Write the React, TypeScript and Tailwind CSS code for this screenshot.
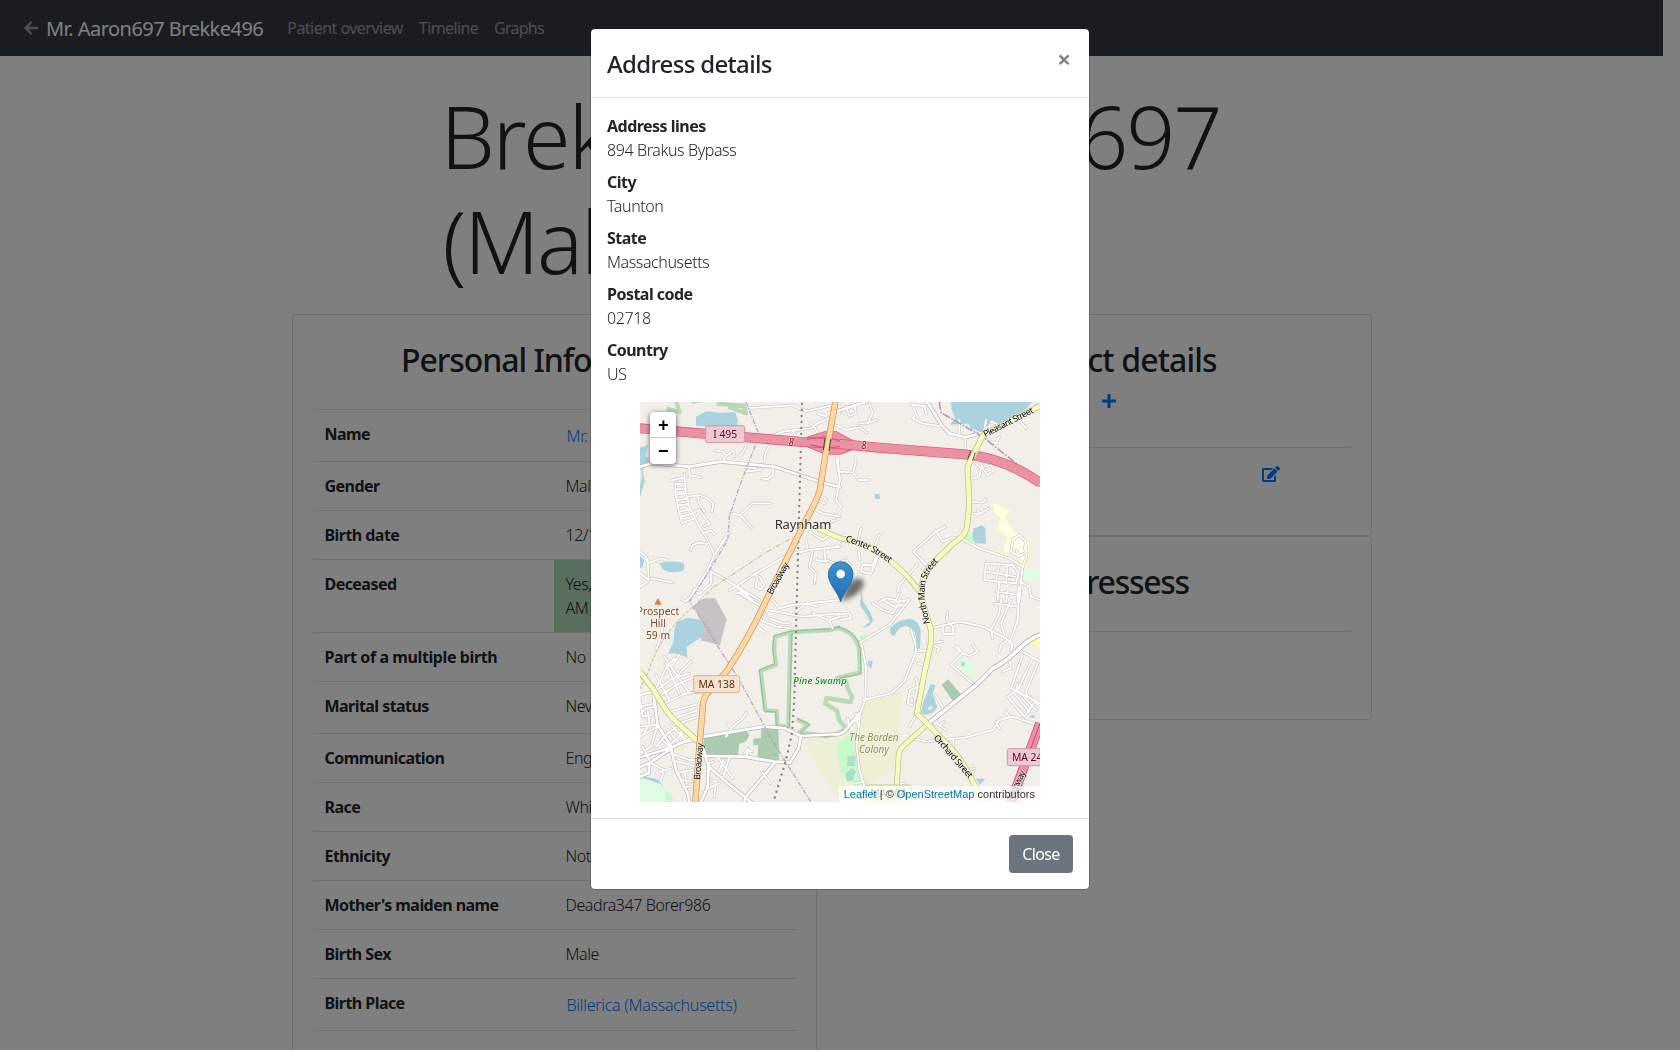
import React from "react";
import { FaArrowLeft, FaEdit, FaPlus } from "react-icons/fa";

/* ---------- Map data: four tiles, 3 units per pixel ---------- */

type Tile = { x: number; y: number; minor: string[]; mid: string[] };

const tiles: Tile[] = [
  {
    x: -12,
    y: -6,
    minor: [
      "M340 24 L470 16 L510 34 L612 10",
      "M240 152 L262 155 L270 168 L262 182 M270 168 L285 158 L292 150 L296 170 M312 168 L325 150 L335 120",
      "M385 185 L388 160 L402 135 M330 215 L375 210 M378 236 L395 238 L410 225 L412 205 M330 202 L360 205",
      "M105 242 L145 232 M118 250 L118 280 L128 330 L138 370 L175 355 M118 252 L146 250 M118 268 L150 266 M118 284 L152 280 M125 300 L154 296 M128 316 L158 312 M130 335 L162 328 M135 350 L165 342 M145 220 L148 270 L160 320 L190 380 L215 420 L235 465",
      "M160 205 L160 225 L195 232 M155 290 L190 285 L215 295 L232 310 L228 335 M185 290 L190 310 L205 335 M168 340 L190 330 L220 372 L205 378 M200 400 L225 392 L235 402",
      "M285 340 L312 345 L350 310 L402 310 M312 345 L348 384 M278 395 L235 465 L215 510 L172 580 M165 450 L170 435 L190 428 L215 432 M235 465 L280 400",
      "M415 105 L440 95 L525 85 L545 70 L612 40 M525 70 L538 85 L545 100 M545 42 L570 48 L590 30",
      "M470 90 L480 110 M545 280 L572 300 M530 325 L560 340 L612 350 M540 300 L565 310",
      "M520 395 L560 420 L580 405 M560 375 L600 360 M600 160 L605 200 L612 240",
      "M280 572 L360 520 L455 465 L520 450 L612 440 M355 520 L365 535 L358 560 L375 568 L385 555 L370 530",
      "M510 420 L515 445 M530 455 L520 500 L540 520 L535 550 M565 450 L568 480 L612 495 M540 480 L570 485",
      "M215 510 L280 545 L370 600 M225 515 L225 550 L190 582 L172 570 M300 580 L330 575 L345 606 M280 545 L350 600",
      "M12 455 L30 470 L35 490 L75 475 L92 480 M35 480 L38 540 L12 520 M45 535 L110 548 M12 560 L35 545",
    ],
    mid: ["M12 200 L50 190 L160 200 L255 185 L415 200 L560 248 L612 262"],
  },
  {
    x: 588,
    y: -6,
    minor: [
      "M30 20 L40 48 L60 40 L55 15 M100 10 L110 40 L95 70 L70 70 M0 75 L30 90 L70 82 L92 98 M95 70 L120 60",
      "M228 10 L240 40 L230 55 L260 70 L310 78 M235 15 L265 18 L270 40 M370 60 L370 105 M388 110 L388 145 M450 60 L445 90 L480 95 L490 75 L465 65 M455 100 L460 125 L480 130 L490 110 M545 55 L570 85",
      "M5 175 L12 240 L0 300 L15 320 L0 340 M12 215 L52 218 L60 180 M52 218 L68 240 L95 240",
      "M420 190 L435 205 L430 230 L400 238 M435 210 L440 190 M440 205 L455 225 L475 210 L465 195 L450 200",
      "M402 305 L440 308 L450 298 M402 340 L430 342 L458 326 M425 330 L432 342",
      "M75 385 L65 430 L72 480 M130 405 L115 440 L125 460 L108 500 M115 495 L80 495 L75 515 L105 522 L130 460",
      "M270 495 L232 455 L300 395 L328 380 M298 390 L320 425 L350 412 L385 420",
      "M0 440 L18 415 M185 575 L190 555 L245 493 M0 490 L30 480 L42 495",
      "M530 420 L550 405 L568 425 L572 455 L550 468 L540 450 M530 420 L525 455 L548 468 M565 440 L572 470 L560 500",
      "M450 490 L530 495 L548 520 L540 550 L445 540 Z M490 492 L480 545 M515 495 L510 550 M450 515 L538 530 M490 545 L485 600 M480 575 L550 585 M515 575 L510 606 M548 560 L545 606",
      "M560 500 L555 545 L580 560 L585 590 L612 600 M555 545 L550 606",
      "M130 606 L150 595 L180 600 L190 580 M180 606 L215 600",
    ],
    mid: [
      "M270 0 L320 80 L340 100 L390 112 L440 98",
      "M0 35 L90 5",
    ],
  },
  {
    x: -12,
    y: 594,
    minor: [
      "M140 0 L150 5 L172 -20 M60 150 L75 110 L85 40 L70 20",
      "M12 285 L55 275 L90 205 M55 275 L110 235 L160 220 M75 285 L130 250 L180 230 M85 310 L150 280 L195 275 M100 335 L195 310 M110 355 L195 328 M125 370 L195 348",
      "M60 225 L100 300 M90 190 L130 280 M85 170 L160 280 M105 200 L130 165 M90 205 L115 175 M120 230 L165 185",
      "M15 320 L55 310 M15 340 L30 325 L60 320 M15 380 L60 375 M12 410 L65 380 M35 330 L40 370 L25 400 M20 350 L45 345 M12 300 L20 350 M65 375 L45 440 L30 450",
      "M60 440 L95 400 L145 365 M85 450 L140 400 M75 415 L100 440 M95 390 L125 425 M105 375 L150 420 M130 400 L150 385 M110 440 L175 410",
      "M45 490 L85 510 L75 540 M60 520 L105 505 M105 460 L160 480 L195 480 M110 480 L180 500 M120 520 L170 510 M135 540 L170 545 M140 560 L175 560 M145 510 L150 540 M20 440 L40 480",
      "M270 410 L290 380 L320 355 L332 338 M285 385 L275 370",
      "M325 460 L335 450 L350 455 M335 445 L332 470 M245 470 L290 535 M262 480 L250 515 M280 472 L262 530 M218 490 L232 485",
      "M340 470 L365 480 M380 518 L402 550 M225 540 L240 545 L235 590 M215 565 L250 550",
      "M310 -20 L395 30 L500 50 L612 40 M385 65 L420 80 L465 85 M395 30 L380 65 M530 40 L580 62 L612 50 M480 35 L510 10 L545 20 M580 62 L590 85 M410 0 L430 25 L470 15 L612 0",
      "M365 80 L385 95 M400 55 L440 70 L460 70",
    ],
    mid: [
      "M202 410 L385 380 L445 385 L495 408 L488 445 L462 488",
      "M205 468 L325 470 L415 485 L462 488",
      "M495 408 L612 402",
      "M415 490 L330 590 L325 606",
      "M12 472 L100 445 L145 425 L195 415",
      "M52 280 L65 375 L105 440 L120 510 L155 580 L160 606",
      "M200 440 L218 500 L270 545 L345 606",
      "M218 500 L215 560 L195 606",
      "M12 500 L40 490 L100 450",
      "M12 530 L38 520 L40 490",
    ],
  },
  {
    x: 588,
    y: 594,
    minor: [
      "M0 45 L40 40 L45 55 L15 60 M110 10 L140 30 L170 40 L190 10 M75 125 L160 75 L220 0 M140 0 L175 20 L200 15",
      "M75 125 L90 200 L88 300 L72 340 L62 440 L70 510 L85 560 M82 300 L165 280 L205 245 L240 155",
      "M225 90 L238 130 L240 155 L275 152 M275 130 L320 125 M290 135 L310 145 L305 155 M245 190 L265 195",
      "M285 85 L370 65 L440 80 L510 115 L530 135 M335 35 L332 60 L350 80 L352 102 L322 102 L322 75",
      "M495 0 L490 40 L465 90 L470 115 M525 0 L495 70 L505 105 M548 0 L545 60 L520 130 M490 155 L495 135 L515 120 M475 10 L545 20 M530 135 L525 150 L545 160 M500 215 L525 205 L520 180",
      "M365 140 L380 160 L345 195 L410 250 M380 160 L400 168 L425 155 L410 135 M360 140 L370 155",
      "M240 235 L245 260 L235 305 M215 310 L230 315 M240 262 L222 270 L215 310 M218 285 L240 290 M245 260 L260 265",
      "M550 150 L612 185 M560 165 L525 265 M590 175 L545 270 M605 190 L570 275 M525 265 L612 310 M545 250 L540 275 L515 290 L565 350 M530 275 L580 335 M550 275 L600 330 M570 280 L612 320 M565 350 L600 300",
      "M298 285 L325 330 M290 360 L330 390 M305 350 L295 375 M310 375 L325 365 M240 345 L220 380",
      "M230 415 L270 425 L390 412 L470 390 L490 360 L530 350 L612 378 M352 420 L352 455 M480 365 L490 385 M510 335 L520 350 M390 515 L415 505",
      "M35 355 L38 375 L70 355 M60 340 L65 375 M85 545 L60 550 M185 555 L205 550",
      "M385 -180 L430 -155 L520 -125 L560 -100",
    ],
    mid: ["M0 405 L25 395 L70 340"],
  },
];

function Network({ kind, stroke, width }: { kind: "minor" | "mid"; stroke: string; width: number }) {
  return (
    <g stroke={stroke} strokeWidth={width} fill="none" strokeLinecap="round" strokeLinejoin="round">
      {tiles.map((t, i) => (
        <g key={i} transform={`translate(${t.x} ${t.y})`}>
          {t[kind].map((d) => (
            <path key={d} d={d} />
          ))}
        </g>
      ))}
    </g>
  );
}

function Road({ d, casing, fill, width }: { d: string; casing: string; fill: string; width: number }) {
  return (
    <g fill="none" strokeLinejoin="round">
      <path d={d} stroke={casing} strokeWidth={width + 4} />
      <path d={d} stroke={fill} strokeWidth={width} />
    </g>
  );
}

function Shield({ x, y, w, h, text, fill, stroke, color }: { x: number; y: number; w: number; h: number; text: string; fill: string; stroke: string; color: string }) {
  return (
    <g>
      <rect x={x} y={y} width={w} height={h} rx="6" fill={fill} stroke={stroke} strokeWidth="3" />
      <text x={x + w / 2} y={y + h / 2 + 11} textAnchor="middle" fontSize="31" fill={color}>
        {text}
      </text>
    </g>
  );
}

const MAIN = "M1200 12 L1108 59 L1040 92 Q1026 100 1020 118 L998 164 Q982 190 983 204 L988 304 L982 368 Q978 392 966 404 L938 426 L888 474 Q862 498 850 530 Q842 560 846 594 L873 684 L873 724 L853 814 L831 934 L863 966 L938 1044 Q980 1090 1028 1200";
const BROADWAY = "M586 0 L564 124 L556 160 L540 262 Q536 280 524 304 L478 394 L373 606 Q330 700 263 804 L204 872 Q188 890 188 920 L178 1034 L166 1200";
const I495 = "M0 79 L318 106 L478 119 L600 126 L718 137 L970 157 Q1090 166 1200 242";

function StreetMap() {
  return (
    <svg viewBox="0 0 1200 1200" className="block size-full font-['Noto_Sans',sans-serif]">
      <defs>
        <path id="main-st" d="M870 664 Q862 628 855 600 Q851 560 861 528 Q872 500 902 472" />
        <path id="center-st" d="M616 418 Q690 438 752 486" />
        <linearGradient id="pin" x1="0" y1="0" x2="0" y2="1">
          <stop offset="0" stopColor="#3f93cf" />
          <stop offset="1" stopColor="#1c6db5" />
        </linearGradient>
        <filter id="soft" x="-30%" y="-30%" width="160%" height="160%">
          <feGaussianBlur stdDeviation="8" />
        </filter>
      </defs>
      <rect width="1200" height="1200" fill="#f2efe9" />

      {/* water */}
      <g fill="#aad3df">
        <path d="M168 44 L200 28 L240 32 L285 30 L294 55 L290 74 L168 72 Z" />
        <path d="M933 0 H1176 L1150 30 L1100 62 L1050 64 L1028 90 L995 82 L985 65 L930 68 L945 48 L935 25 Z" />
        <path d="M0 136 L24 130 L16 160 L28 175 L8 205 L14 240 L0 285 L0 250 L6 222 L0 190 Z" />
        <path d="M58 484 Q90 474 130 482 Q136 496 128 506 Q96 516 70 504 Z M0 460 L12 475 L8 495 L0 498 Z" />
        <path d="M110 660 L140 648 L180 652 L196 682 L190 704 L165 718 L140 735 L142 768 L118 756 L85 754 L100 720 L104 680 Z" />
        <path d="M705 276 L718 276 L720 292 L705 290 Z" />
        <path d="M1000 380 L1025 370 L1036 378 L1038 425 L1005 424 L995 405 Z" />
        <path d="M664 564 L670 600 L690 630 L700 655 L688 672 L664 678 L690 660 L680 640 L660 610 Z" />
        <path d="M750 680 Q770 654 806 650 Q838 652 842 690 L840 740 L828 742 L828 705 Q822 678 800 672 Q772 674 764 702 L752 698 Z" />
        <path d="M684 776 L698 776 L694 800 L684 792 Z" />
        <path
          fillRule="evenodd"
          d="M842 936 L850 900 L872 846 L886 850 L878 876 L892 916 L882 930 L860 938 Z M868 912 L880 914 L872 924 L864 922 Z"
        />
        <path d="M0 1122 L50 1130 L68 1150 L70 1160 L45 1156 L20 1135 L0 1134 Z M1008 1130 L1036 1130 L1020 1150 Z M1172 940 H1184 V948 H1172 Z" />
      </g>

      {/* fields, parks and built areas */}
      <path d="M1060 303 L1110 325 L1095 345 L1120 385 L1170 425 L1158 495 L1142 490 L1140 455 L1085 450 L1105 405 L1070 385 L1082 345 L1060 335 Z" fill="#ffffe5" stroke="#fbfba8" strokeWidth="3" />
      <path d="M1152 502 H1200 V534 H1152 Z" fill="#dffce2" />
      <path d="M980 398 L998 396 L1000 418 L990 422 L975 410 Z" fill="#c8facc" />
      <path d="M950 778 L970 762 L1004 795 L1008 838 L980 820 Z" fill="#dffce2" />
      <path d="M963 780 h12 v12 h-12 Z" fill="#aae0cb" />
      <path d="M905 848 L925 832 L970 885 L942 902 Z" fill="#aacbaf" />
      <path d="M0 1125 L60 1145 L75 1160 L80 1200 H0 Z" fill="#dffce2" />
      <path d="M76 1160 L100 1190 V1200 H76 Z" fill="#c8facc" />
      <path d="M492 1010 L560 1002 L640 985 L670 892 L745 885 L785 862 L778 1000 L768 1100 L700 1140 L690 1200 H600 L540 1110 Z" fill="#eef0d5" />
      <path d="M592 1030 L640 985 L648 1040 L655 1100 L672 1145 L650 1150 L600 1110 Z M655 706 L678 692 L680 700 L668 715 Z" fill="#c8facc" />
      <path d="M622 1062 h24 v14 h-24 Z M622 1078 h24 v14 h-24 Z M616 1115 l18 -16 l14 8 l-10 28 l-18 4 Z" fill="#aae0cb" />
      <path d="M160 612 L190 590 L225 588 L260 652 L250 690 L240 730 L182 715 L196 682 Z" fill="#c5c3c3" />
      <path d="M192 1006 L320 986 L328 1002 L316 1020 L298 1025 L294 1060 L190 1060 Z M340 1010 L362 1008 L365 975 L415 980 L418 1080 L352 1074 L355 1030 L340 1030 Z" fill="#aacbaf" />
      <path d="M112 1036 h20 v8 h-20 Z" fill="#f8f39a" />
      <path d="M1160 712 L1200 700 V740 Z" fill="#ffffa8" />

      {/* nature reserve outline */}
      <g fill="none" strokeLinejoin="round">
        <g stroke="#b9d9b9" strokeWidth="13">
          <path d="M600 676 L570 684 L455 690 L405 704 L402 742 L408 788 L362 806 L376 925 L410 927 L412 970 L445 974 L452 694 M470 952 L505 968 L478 992 L560 1002 L590 996 L625 978 M588 676 Q650 690 658 745 L660 812 L590 828 L618 838 L624 860 L636 885 L632 900 L560 888 L555 905 L590 925 L598 955 L624 985" />
          <path d="M110 0 L118 30 L80 20 M155 0 L180 -5 M230 5 L312 12 L318 34 L265 14" />
        </g>
        <path d="M600 673 L570 681 L455 687 L402 702 L398 742 L404 786 L358 804 L373 928 L407 930 L409 973 L448 977 L456 694 M470 949 L508 967 L480 995 L560 1005 L590 999 L628 982 M588 673 Q653 687 661 742 L663 815 L590 831" stroke="#8fc190" strokeWidth="3" />
      </g>

      <Network kind="minor" stroke="#c6c4c0" width={9} />
      <Network kind="mid" stroke="#b8b6b3" width={12} />
      <Network kind="minor" stroke="#ffffff" width={5.5} />
      <Network kind="mid" stroke="#ffffff" width={8} />

      {/* tracks and boundaries */}
      <g fill="none">
        <path d="M486 6 L470 606 L463 894 L456 994 L438 1074 L400 1200" stroke="#838383" strokeWidth="7" strokeDasharray="0.1 17.9" strokeLinecap="round" />
        <path d="M318 0 L358 99 L298 254 L268 344 L263 414 L203 514 L148 600 L193 664 L228 724 L298 834 L358 944 L408 1034 L513 1200" stroke="#b59bb8" strokeWidth="4" strokeDasharray="14 5 4 5" opacity=".85" />
        <path d="M898 0 L903 32 L1028 104 L1128 184 L1200 254" stroke="#b59bb8" strokeWidth="5" strokeDasharray="24 5 5 5" />
        <path d="M478 396 L380 450 L220 556 L168 606" stroke="#cfae7c" strokeWidth="3" strokeDasharray="16 6 4 6" />
        <path d="M180 598 Q60 690 25 810 L0 860" stroke="#cfae7c" strokeWidth="3" strokeDasharray="9 6" />
      </g>

      {/* classified roads */}
      <Road d="M863 966 L1008 849 Q1030 830 1058 799 Q1090 785 1128 749 Q1160 715 1200 698" casing="#a8a6a3" fill="#fff" width={11} />
      <g>
        <path d="M478 119 L555 94 L588 94 L650 128 M478 119 L555 150 L600 152 L650 132" fill="none" stroke="#dc4a7c" strokeWidth="13" />
        <path d="M478 119 L555 94 L588 94 L650 128 L600 152 L555 150 Z" fill="#e892a2" stroke="#e892a2" strokeWidth="9" />
      </g>
      <Road d={I495} casing="#e0507f" fill="#e892a2" width={26} />
      <path d="M500 112 L560 104 L600 118 M510 128 L560 138 L600 134" fill="none" stroke="#dc4a7c" strokeWidth="3" />
      <Road d="M1113 1200 L1200 964" casing="#dc3d72" fill="#e892a2" width={25} />
      <path d="M1156 1084 L1200 964" stroke="#dc3d72" strokeWidth="3" />
      <Road d="M534 380 L600 408 L668 426 Q740 458 803 524 L843 572" casing="#b9bd84" fill="#f7fabf" width={13} />
      <Road d="M0 809 L40 862 Q80 932 103 954 L186 1030" casing="#b9bd84" fill="#f7fabf" width={14} />
      <Road d="M863 966 L792 1030 Q776 1044 776 1062 L770 1154 L660 1200" casing="#b9bd84" fill="#f7fabf" width={13} />
      <Road d={MAIN} casing="#b9bd84" fill="#f7fabf" width={14} />
      <Road d={BROADWAY} casing="#c88f4a" fill="#fcd6a4" width={15} />
      <path d="M555 108 L550 144 M572 111 L567 147 M992 148 L983 172 M1006 152 L998 176" stroke="#444" strokeWidth="3" />

      {/* labels */}
      <g stroke="#f7f4ee" strokeWidth="4" strokeOpacity=".8" paintOrder="stroke" strokeLinejoin="round">
        <g fontSize="27" fill="#000">
          <text fontSize="39" fill="#333" x="489" y="382" textAnchor="middle" textLength="170">Raynham</text>
          <text transform="translate(396 580) rotate(-61)" textLength="106">Broadway</text>
          <text transform="translate(180 1134) rotate(-85)" textLength="110">Broadway</text>
          <text transform="translate(1036 106) rotate(-27)" textLength="164">Pleasant Street</text>
          <text transform="translate(880 1008) rotate(49)" textLength="162">Orchard Street</text>
          <text transform="translate(1117 1194) rotate(-64)" textLength="92">Highway</text>
          <text>
            <textPath href="#center-st" textLength="148">Center Street</textPath>
          </text>
          <text>
            <textPath href="#main-st" textLength="200">North Main Street</textPath>
          </text>
        </g>
        <g fontSize="31" fill="#7a4a2a" textAnchor="middle">
          <text x="54" y="640">Prospect</text>
          <text x="54" y="676">Hill</text>
          <text x="54" y="711">59 m</text>
        </g>
        <text x="460" y="847" fontSize="28" fontStyle="italic" fontWeight="500" fill="#118a2a" textLength="160">Pine Swamp</text>
        <g fontSize="30" fontStyle="italic" fill="#8f9155" textAnchor="middle">
          <text x="702" y="1016" textLength="148">The Borden</text>
          <text x="702" y="1052" textLength="90">Colony</text>
        </g>
        <g fontSize="30" fontStyle="italic" fontWeight="500" fill="#a01830" textAnchor="middle">
          <text x="454" y="132">8</text>
          <text x="671" y="142">8</text>
        </g>
      </g>
      <path d="M43 608 L54 588 L65 608 Z" fill="#cf8350" />
      <Shield x={197} y={71} w={117} h={51} text="I 495" fill="#edcad2" stroke="#d495a3" color="#620728" />
      <Shield x={161} y={821} w={138} h={51} text="MA 138" fill="#f5e1cf" stroke="#dcb392" color="#5b3314" />
      <Shield x={1102} y={1040} w={119} h={51} text="MA 24" fill="#edcad2" stroke="#d495a3" color="#620728" />
      <Shield x={676} y={1149} w={138} h={51} text="MA 104" fill="#f5f7cf" stroke="#c3c88a" color="#50552a" />

      {/* marker */}
      <path d="M604 598 L622 548 L644 530 Q680 526 668 556 Q652 584 604 598 Z" fill="#000" opacity=".55" filter="url(#soft)" />
      <g transform="translate(0 2)">
        <path d="M602 598 C596 570 565 545 565 515 A37 38 0 0 1 639 515 C639 545 608 570 602 598 Z" fill="url(#pin)" stroke="#2a6ea8" strokeWidth="3" />
        <circle cx="602" cy="514" r="13" fill="#fff" />
      </g>
    </svg>
  );
}

/* ---------- Page ---------- */

const personal: { label: string; value: string; link?: boolean; mark?: boolean; tall?: boolean }[] = [
  { label: "Name", value: "Mr. Aaron697", link: true },
  { label: "Gender", value: "Male" },
  { label: "Birth date", value: "12/12/1965" },
  { label: "Deceased", value: "Yes, 12/12/1985, 10:36\nAM", mark: true },
  { label: "Part of a multiple birth", value: "No" },
  { label: "Marital status", value: "Never Married", tall: true },
  { label: "Communication", value: "English" },
  { label: "Race", value: "White" },
  { label: "Ethnicity", value: "Not Hispanic" },
  { label: "Mother's maiden name", value: "Deadra347 Borer986" },
  { label: "Birth Sex", value: "Male" },
  { label: "Birth Place", value: "Billerica (Massachusetts)", link: true },
];

function PersonalCard() {
  return (
    <section className="h-[900px] rounded border border-black/[.125] bg-white p-5">
      <h2 className="mt-[6px] text-center text-[32px] leading-[38px] font-medium tracking-[-1.05px]">Personal Information</h2>
      <div className="mt-[30px]">
        {personal.map((r) => (
          <div key={r.label} className="flex border-t border-[#dee2e6]">
            <div
              className={
                r.label.length > 21
                  ? "w-[241px] shrink-0 py-3 pl-3 font-bold tracking-[-0.4px]"
                  : "w-[241px] shrink-0 py-3 pl-3 font-bold tracking-[-0.55px]"
              }
            >
              {r.label}
            </div>
            <div
              className={
                r.link
                  ? "flex-1 pt-[14px] pr-3 pb-[13px] pl-[13px] font-light tracking-[-0.27px] whitespace-nowrap text-[#007bff]"
                  : r.mark
                    ? "flex-1 bg-[#b1dfbb] p-3 font-light tracking-[-0.43px] whitespace-pre-line"
                    : r.tall
                      ? "flex-1 px-3 pt-3 pb-[15px] font-light tracking-[-0.43px]"
                      : "flex-1 p-3 font-light tracking-[-0.43px]"
              }
            >
              {r.value}
            </div>
          </div>
        ))}
        <div className="flex border-t border-[#dee2e6]">
          <div className="w-[241px] shrink-0 pt-[13px] pb-3 pl-3 font-bold tracking-[-0.45px]">Disability adjusted life years</div>
        </div>
      </div>
    </section>
  );
}

function Page() {
  return (
    <div className="mr-[17px]">
      <nav className="flex h-14 items-center bg-[#343a40] pl-6 text-white/50">
        <FaArrowLeft className="h-4 w-[14px]" />
        <span className="mt-px ml-2 text-xl leading-[30px] tracking-[-0.52px] text-white">Mr. Aaron697 Brekke496</span>
        <div className="ml-6 flex gap-4">
          <span className="tracking-[-0.53px]">Patient overview</span>
          <span className="tracking-[-0.62px]">Timeline</span>
          <span className="tracking-[-0.75px]">Graphs</span>
        </div>
      </nav>
      <main className="mx-auto w-[1080px]">
        <h1 className="mt-[27px] ml-[149px] w-[800px] text-[86px] leading-[105px] font-light tracking-[-2px]">
          Brekke496 Aaron697
          <br />
          <span className="ml-[2px] tracking-[-2.2px]">(Male)</span>
        </h1>
        <div className="mt-[21px] grid grid-cols-2 gap-[30px]">
          <PersonalCard />
          <div>
            <section className="h-[222px] rounded border border-black/[.125] bg-white p-5">
              <h2 className="mt-[6px] text-center text-[32px] leading-[38px] font-medium tracking-[-0.85px]">Contact details</h2>
              <div className="mt-[14px] flex justify-center text-[#007bff]">
                <FaPlus className="size-4" />
              </div>
              <div className="mt-[38px] flex justify-end border-t border-[#dee2e6] pt-[18px] pr-[71px] text-[#007bff]">
                <FaEdit className="h-4 w-[18px]" />
              </div>
            </section>
            <section className="h-[184px] rounded border border-black/[.125] bg-white p-5">
              <h2 className="mt-[6px] text-center text-[32px] leading-[38px] font-medium tracking-[-1.3px]">Addressess</h2>
              <div className="mt-[30px] border-t border-[#dee2e6]" />
            </section>
          </div>
        </div>
      </main>
    </div>
  );
}

function AddressModal() {
  return (
    <div className="fixed inset-0 flex items-start justify-center bg-black/50 pt-7">
      <div className="w-[500px] rounded-[5px] border border-black/20 bg-white bg-clip-padding" role="dialog">
        <header className="flex h-[69px] items-start justify-between border-b border-[#dee2e6] px-4 pt-4">
          <h3 className="mt-px text-2xl leading-9 font-medium tracking-[-0.66px]">Address details</h3>
          <button className="mt-[2px] mr-[2px] h-6 text-2xl leading-6 font-bold text-black/50">×</button>
        </header>
        <div className="px-4 pt-4">
          <dl className="leading-6">
            {address.map(([k, v]) => (
              <div key={k} className="pb-2">
                <dt className="font-bold tracking-[-0.52px]">{k}</dt>
                <dd className="font-light tracking-[-0.4px]">{v}</dd>
              </div>
            ))}
          </dl>
          <div className="relative mx-auto mt-2 size-[400px] overflow-hidden">
            <StreetMap />
            <div className="absolute top-[10px] left-[10px] w-[26px] rounded bg-white pl-px text-center font-['Liberation_Mono',monospace] text-lg font-bold text-black shadow-[0_1px_5px_rgba(0,0,0,0.65)]">
              <div className="-ml-px h-[26px] border-b border-[#ccc] pl-px leading-[28px]">+</div>
              <div className="h-[26px] leading-[28px]">−</div>
            </div>
            <div className="absolute right-0 bottom-0 h-4 bg-white/70 px-[5px] font-['Liberation_Sans',sans-serif] text-[11px] leading-4 whitespace-nowrap text-[#333]">
              <span className="text-[#0078a8]">Leaflet</span> | © <span className="text-[#0078a8]">OpenStreetMap</span> contributors
            </div>
          </div>
        </div>
        <footer className="mt-4 flex h-[71px] justify-end border-t border-[#dee2e6] p-4">
          <button className="h-[38px] w-16 rounded bg-[#6c757d] tracking-[-0.6px] text-white">Close</button>
        </footer>
      </div>
    </div>
  );
}

const address = [
  ["Address lines", "894 Brakus Bypass"],
  ["City", "Taunton"],
  ["State", "Massachusetts"],
  ["Postal code", "02718"],
  ["Country", "US"],
];

export default function App() {
  return (
    <div className="h-[1050px] overflow-hidden bg-white font-['Noto_Sans',sans-serif] text-base leading-6 text-[#212529]">
      <Page />
      <AddressModal />
    </div>
  );
}
